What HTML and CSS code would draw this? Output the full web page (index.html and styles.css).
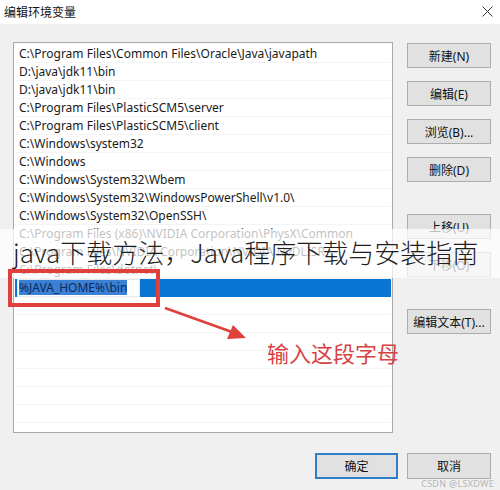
FILE: index.html
```html
<!DOCTYPE html>
<html>
<head>
<meta charset="utf-8">
<link rel="stylesheet" href="styles.css">
</head>
<body>
<div class="window">
  <div class="titlebar">
    <span class="title">编辑环境变量</span>
    <svg class="close" width="11" height="11" viewBox="0 0 11 11"><path d="M0.5 0.5L10.5 10.5M10.5 0.5L0.5 10.5" stroke="#333" stroke-width="1" fill="none"/></svg>
  </div>
  <div class="content">
    <div class="main">
      <div class="list">
        <div class="row">C:\Program Files\Common Files\Oracle\Java\javapath</div>
        <div class="row">D:\java\jdk11\bin</div>
        <div class="row">D:\java\jdk11\bin</div>
        <div class="row">C:\Program Files\PlasticSCM5\server</div>
        <div class="row">C:\Program Files\PlasticSCM5\client</div>
        <div class="row">C:\Windows\system32</div>
        <div class="row">C:\Windows</div>
        <div class="row">C:\Windows\System32\Wbem</div>
        <div class="row">C:\Windows\System32\WindowsPowerShell\v1.0\</div>
        <div class="row">C:\Windows\System32\OpenSSH\</div>
        <div class="row">C:\Program Files (x86)\NVIDIA Corporation\PhysX\Common</div>
        <div class="row">C:\Program Files\NVIDIA Corporation\NVIDIA NvDLISR</div>
        <div class="row">C:\Program Files\dotnet\</div>
        <div class="row selected"><span class="edit"><span class="sel">%JAVA_HOME%\bin</span></span></div>
        <div class="row"></div>
        <div class="row"></div>
        <div class="row"></div>
        <div class="row"></div>
        <div class="row"></div>
        <div class="row"></div>
        <div class="row"></div>
      </div>
      <div class="buttons">
        <button class="btn">新建(N)</button>
        <button class="btn">编辑(E)</button>
        <button class="btn">浏览(B)...</button>
        <button class="btn">删除(D)</button>
        <button class="btn gap">上移(U)</button>
        <button class="btn">下移(O)</button>
        <button class="btn gap">编辑文本(T)...</button>
      </div>
    </div>
    <div class="footer">
      <button class="btn ok">确定</button>
      <button class="btn cancel">取消</button>
    </div>
  </div>

  <div class="band"></div>
  <div class="headline">java下载方法，Java程序下载与安装指南</div>
  <div class="redbox"></div>
  <svg class="arrow" width="500" height="490" viewBox="0 0 500 490">
    <line x1="165" y1="308" x2="232" y2="332" stroke="#e0403c" stroke-width="2.5"/>
    <polygon points="246,338 227,339 233,325" fill="#e0403c"/>
  </svg>
  <div class="note">输入这段字母</div>
  <div class="watermark">CSDN @LSXDWE</div>
</div>
</body>
</html>
```

FILE: styles.css
```css
* { box-sizing: border-box; }
html, body { margin: 0; padding: 0; }
body {
  width: 500px;
  height: 490px;
  overflow: hidden;
  font-family: "Noto Sans", "Noto Sans CJK SC", sans-serif;
}
.window {
  position: relative;
  width: 500px;
  height: 490px;
  background: #f0f0f0;
}
.titlebar {
  height: 24px;
  background: #fff;
  display: flex;
  align-items: center;
  justify-content: space-between;
  padding: 0 7px 2px 4px;
}
.title {
  font-family: "Noto Sans CJK SC", sans-serif;
  font-size: 12px;
  color: #111;
}
.content {
  padding: 18px 9px 0 13px;
}
.main {
  display: flex;
  gap: 14px;
}
.list {
  width: 380px;
  height: 391px;
  background: #fff;
  border: 1px solid #a9a9a9;
  padding: 2px 1px 0 1px;
  overflow: hidden;
}
.row {
  height: 18px;
  line-height: 18px;
  font-size: 12px;
  color: #1a1a1a;
  padding-left: 4px;
  border-bottom: 1px solid #f4f4f4;
  white-space: nowrap;
}
.row.selected {
  background: #0a74d2;
  padding-left: 2px;
  border-bottom: none;
}
.edit {
  display: inline-block;
  width: 123px;
  height: 18px;
  background: #fff;
  border: 1px solid #e8e8e8;
  padding-left: 1px;
  line-height: 16px;
}
.sel {
  background: #3a80d4;
  color: #0d2a58;
  display: inline-block;
  line-height: 15px;
}
.buttons {
  display: flex;
  flex-direction: column;
  gap: 13px;
  padding-top: 1px;
}
.btn {
  width: 84px;
  height: 25px;
  background: #e1e1e1;
  border: 1px solid #adadad;
  font-family: "Noto Sans", "Noto Sans CJK SC", sans-serif;
  font-size: 12px;
  color: #111;
  padding: 0;
  margin: 0;
}
.btn.gap { margin-top: 19px; }
.footer {
  display: flex;
  justify-content: flex-end;
  gap: 9px;
  margin-top: 20px;
}
.btn.ok {
  width: 83px;
  height: 26px;
  border: 2px solid #2f7fc8;
}
.btn.cancel { height: 26px; }

.band {
  position: absolute;
  left: 0;
  top: 229px;
  width: 500px;
  height: 49px;
  background: rgba(255, 255, 255, 0.72);
}
.headline {
  position: absolute;
  left: 13px;
  top: 237px;
  font-family: "Noto Sans CJK SC", sans-serif;
  font-size: 26px;
  font-weight: 300;
  line-height: 30px;
  color: #1e1e1e;
  white-space: nowrap;
}
.redbox {
  position: absolute;
  left: 8px;
  top: 269px;
  width: 152px;
  height: 38px;
  border: 4px solid #e0403c;
}
.arrow {
  position: absolute;
  left: 0;
  top: 0;
}
.note {
  position: absolute;
  left: 267px;
  top: 338px;
  font-family: "Noto Sans CJK SC", sans-serif;
  font-size: 22px;
  line-height: 28px;
  color: #d9413e;
  white-space: nowrap;
}
.watermark {
  position: absolute;
  right: 6px;
  top: 479px;
  font-family: "Noto Sans", sans-serif;
  font-size: 9px;
  line-height: 10px;
  color: #b5b5b5;
  letter-spacing: 0.3px;
}
```
